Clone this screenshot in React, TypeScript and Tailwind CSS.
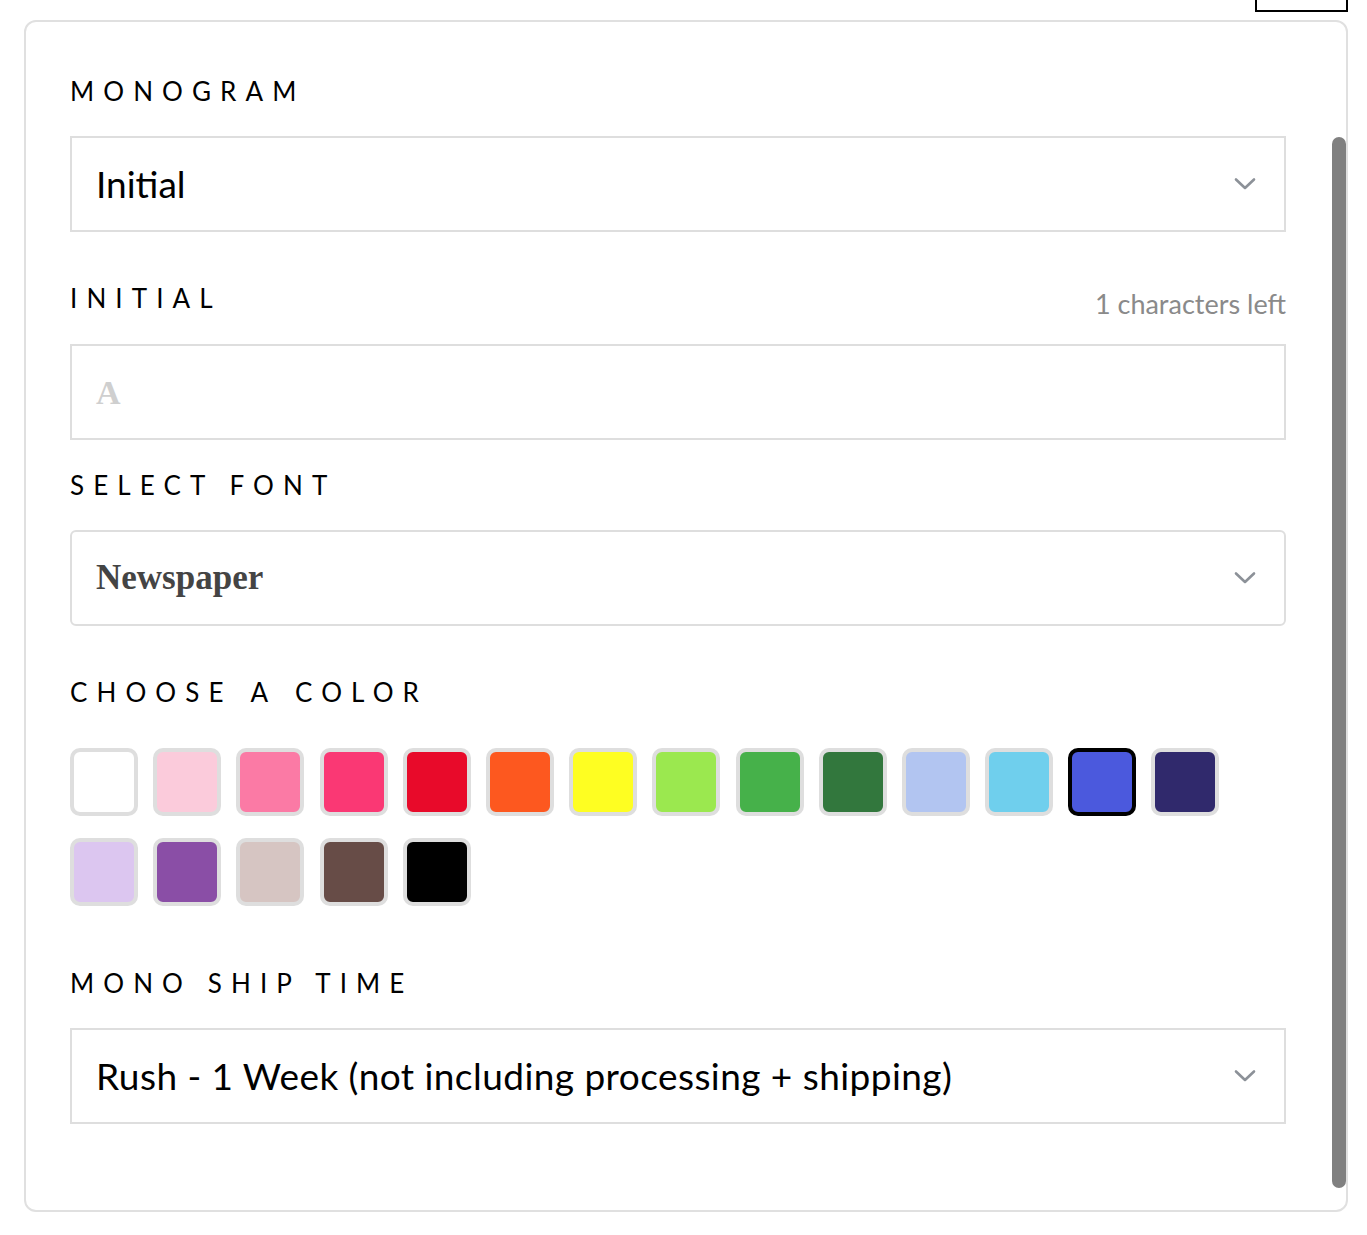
const swatches = [
  '#ffffff', '#fbcbdb', '#fb7aa5', '#fa3874', '#e80a2a', '#fd581f', '#fefe22',
  '#9be84f', '#46b14a', '#32773d', '#b2c5f1', '#6fcfed', '#4b59dd', '#30296c',
  '#dcc6f0', '#8a4ea6', '#d6c5c2', '#674c47', '#000000',
]

const SELECTED = '#4b59dd'

function Label({ children }: { children: React.ReactNode }) {
  return (
    <p className="text-[26px] leading-[30px] tracking-[0.35em] text-black uppercase">{children}</p>
  )
}

function Chevron() {
  return (
    <svg width="22" height="14" viewBox="0 0 22 14" fill="none">
      <polyline points="2,2.5 11,11 20,2.5" stroke="#8c9198" strokeWidth="2.6" strokeLinecap="round" strokeLinejoin="round" />
    </svg>
  )
}

function SelectBox({ children, rounded }: { children: React.ReactNode; rounded?: boolean }) {
  return (
    <div
      className={`flex h-[96px] items-center justify-between border-2 border-[#dedede] pl-[24px] pr-[28px] ${
        rounded ? 'rounded-md' : ''
      }`}
    >
      {children}
      <Chevron />
    </div>
  )
}

export default function App() {
  return (
    <div className="min-h-screen bg-white" style={{ fontFamily: 'Lato, "Open Sans", sans-serif' }}>
      <div className="flex justify-end pr-[19px]">
        <div className="h-3 w-[93px] border-2 border-t-0 border-black" />
      </div>

      <div className="ml-6 mr-[19px] mt-2 flex h-[1192px] rounded-xl border-2 border-[#e0e0e0]">
        <div className="flex-1 pl-[44px] pr-[46px] pt-[54px]">
          {/* Monogram */}
          <Label>Monogram</Label>
          <div className="mt-[30px]">
            <SelectBox>
              <span className="text-[37px] text-black">Initial</span>
            </SelectBox>
          </div>

          {/* Initial */}
          <div className="mt-[51px] flex h-[30px] items-start justify-between">
            <Label>Initial</Label>
            <span className="pt-[6px] text-[27px] leading-[30px] text-[#8a8a8a]">1 characters left</span>
          </div>
          <div className="mt-[31px] flex h-[96px] items-center border-2 border-[#dedede] pl-[24px]">
            <span
              className="text-[34px] font-bold text-[#cfcfcf]"
              style={{ fontFamily: '"Liberation Serif", serif' }}
            >
              A
            </span>
          </div>

          {/* Font */}
          <div className="mt-[30px]">
            <Label>Select Font</Label>
          </div>
          <div className="mt-[30px]">
            <SelectBox rounded>
              <span
                className="text-[35px] font-bold text-[#444]"
                style={{ fontFamily: '"Liberation Serif", serif' }}
              >
                Newspaper
              </span>
            </SelectBox>
          </div>

          {/* Colors */}
          <div className="mt-[51px]">
            <p className="text-[26px] leading-[30px] tracking-[0.35em] text-black uppercase [word-spacing:3px]">
              Choose a color
            </p>
          </div>
          <div className="mt-[41px] flex flex-wrap gap-x-[15.2px] gap-y-[22px]">
            {swatches.map((c) => (
              <div
                key={c}
                className={`h-[68px] w-[68px] rounded-[10px] border-4 ${
                  c === SELECTED ? 'border-black' : 'border-[#dedede]'
                }`}
                style={{ backgroundColor: c }}
              />
            ))}
          </div>

          {/* Ship time */}
          <div className="mt-[62px]">
            <Label>Mono ship time</Label>
          </div>
          <div className="mt-[30px]">
            <SelectBox>
              <span className="text-[37px] tracking-[0.012em] text-black">
                Rush - 1 Week (not including processing + shipping)
              </span>
            </SelectBox>
          </div>
        </div>

        <div className="w-[14px] pb-[22px] pt-[115px]">
          <div className="h-full rounded-full bg-[#808080]" />
        </div>
      </div>
    </div>
  )
}
